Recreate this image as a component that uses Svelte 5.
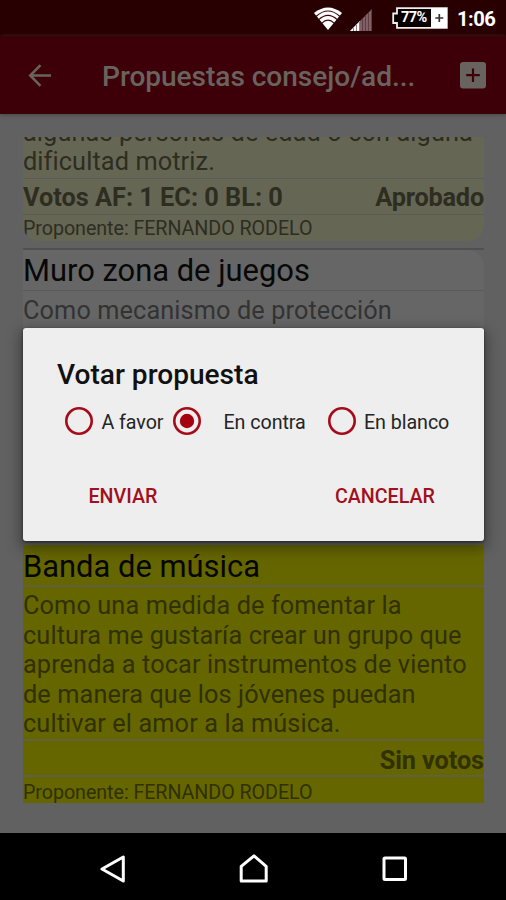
<script>
  const options = [
    { label: 'A favor', cls: 'favor' },
    { label: 'En contra', cls: 'contra' },
    { label: 'En blanco', cls: 'blanco' }
  ];
  let selected = $state(1);
  const signal = [3, 6, 9, 12, 15, 18, 21];
</script>

<div class="screen">
  <header class="status">
    <svg class="wifi" width="28" height="24" viewBox="0 0 28 24">
      <path d="M0 6Q14-5 28 6L14 23Z" fill="#fff" />
      <path d="M2 9.5Q14-1.5 26 9.5M4.5 12.8Q14 4 23.5 12.8M7.6 16.4Q14 10 20.4 16.4" fill="none" stroke="#390408" stroke-width="1.1" />
    </svg>
    <svg class="signal" width="22" height="22" viewBox="0 0 22 22">
      <path d="M0 22L22 0V22Z" fill="#806066" />
      <path d="M0 22L10 12V22Z" fill="#fff" />
      {#each signal as x}
        <path d={`M${x + 0.5} ${22 - x}V22`} stroke="#4b2529" stroke-width=".6" />
      {/each}
    </svg>
    <div class="battery">
      <svg width="56" height="23" viewBox="0 0 56 23">
        <path d="M5 1.2H54.8V20.8H5V16H1.2V6.5H5Z" fill="#080000" stroke="#eee" stroke-width="1.8" />
        <path d="M39 1H55V21H39Z" fill="#fff" />
        <path d="M47.3 7V15M43.3 11H51.3" stroke="#393035" stroke-width="1.7" />
      </svg>
      <b>77%</b>
    </div>
    <span class="clock">1:06</span>
  </header>

  <div class="appbar">
    <svg class="back" width="24" height="24" viewBox="0 0 24 24" fill="none" stroke="#68635f" stroke-width="2.5">
      <path d="M12.5 1.2L2.2 11.5L12.5 21.8M2.5 11.5H23" />
    </svg>
    <h1>Propuestas consejo/ad...</h1>
    <svg class="add" width="26" height="27" viewBox="0 0 26 27">
      <rect width="26" height="26.5" rx="3" fill="#68635f" />
      <path d="M13 6.5V20M6.2 13.2H19.8" stroke="#3d0008" stroke-width="2.2" />
    </svg>
  </div>

  <main>
    <div class="list">
      <article class="pale">
        <p class="clip">algunas personas de edad o con alguna<br />dificultad motriz.</p>
        <div class="result"><b>Votos AF: 1 EC: 0 BL: 0</b><b class="state">Aprobado</b></div>
        <small>Proponente: FERNANDO RODELO</small>
      </article>
      <hr />
      <article class="plain">
        <h2>Muro zona de juegos</h2>
        <p>Como mecanismo de protección</p>
      </article>
      <article class="yellow">
        <h2>Banda de música</h2>
        <p>Como una medida de fomentar la<br />cultura me gustaría crear un grupo que<br />aprenda a tocar instrumentos de viento<br />de manera que los jóvenes puedan<br />cultivar el amor a la música.</p>
        <div class="result last"><b>Sin votos</b></div>
        <small>Proponente: FERNANDO RODELO</small>
      </article>
    </div>
  </main>

  <nav>
    <svg width="26" height="28" viewBox="0 0 26 28"><path d="M2 14L23.3 2V26Z" /></svg>
    <svg width="30" height="29" viewBox="0 0 30 29"><path d="M2.2 27V12.3L15 1.8L27.2 12.3V27Z" /></svg>
    <svg width="26" height="26" viewBox="0 0 26 26"><rect x="2" y="2" width="21.5" height="21.5" rx="1" /></svg>
  </nav>

  <section class="dialog" role="dialog" aria-label="Votar propuesta">
    <h3>Votar propuesta</h3>
    <div class="options">
      {#each options as o, i}
        <button class={o.cls} onclick={() => (selected = i)}>
          <svg width="30" height="30" viewBox="0 0 30 30">
            <circle cx="15" cy="15" r="12.7" fill="none" stroke="#a50b18" stroke-width="2.6" />
            {#if selected === i}<circle cx="15" cy="15" r="7.2" fill="#a5000f" />{/if}
          </svg>
          <span>{o.label}</span>
        </button>
      {/each}
    </div>
    <div class="actions"><button>ENVIAR</button><button>CANCELAR</button></div>
  </section>
</div>

<style>
  :global(body) { margin: 0; background: #000; }
  .screen { position: relative; width: 506px; height: 900px; display: flex; flex-direction: column; overflow: hidden; font-family: Roboto, sans-serif; background: #616161; }
  svg { display: block; flex: none; }
  .status { height: 36px; flex: none; box-sizing: border-box; display: flex; align-items: flex-start; padding: 7px 0 0 314px; background: #280002; }
  .signal { margin: 2px 0 0 8px; }
  .battery { position: relative; margin-left: 20px; }
  .battery b { position: absolute; left: 9px; top: 2px; font-size: 14.5px; line-height: 18px; color: #fff; letter-spacing: -.6px; }
  .clock { margin: -1px 0 0 9px; font-size: 20.2px; line-height: 26px; font-weight: 700; letter-spacing: -.5px; color: #fff; white-space: nowrap; }
  .appbar { height: 78px; flex: none; box-sizing: border-box; display: flex; align-items: flex-start; padding: 26px 20px 0 28px; background: #3d0008; box-shadow: 0 1px 4px #454545; z-index: 1; }
  .back { margin-top: 2px; }
  h1 { margin: -2px 0 0 50px; flex: 1; font-size: 28.1px; line-height: 34px; font-weight: 500; color: #68635f; letter-spacing: -.05px; white-space: nowrap; }
  main { flex: 1; min-height: 0; padding: 23px 22px 0 23px; }
  .list { display: flex; flex-direction: column; height: 666px; overflow: hidden; }
  article { flex: none; box-sizing: border-box; display: flex; flex-direction: column; white-space: nowrap; overflow: hidden; }
  .pale { height: 104px; background: #666655; color: #2d2d20; border-radius: 0 0 16px 16px; }
  .pale .clip { margin-top: -19px; height: 60px; line-height: 29px; }
  .pale .result { border-top: 1px solid #5b5b55; height: 35px; line-height: 37px; }
  .pale small { border-top: 1px solid #5b5b55; height: 26px; line-height: 28px; }
  hr { flex: none; margin: 7px 0 0; border: 0; height: 2px; background: #505050; }
  .plain { height: 286px; background: #666; border-radius: 0 16px 0 0; }
  .plain h2 { height: 40px; line-height: 42px; }
  .plain p { border-top: 1px solid #5a5a5a; color: #333; line-height: 39px; }
  .yellow { margin-top: 9px; height: 258px; background: #666600; color: #303000; }
  .yellow h2 { height: 40px; line-height: 43px; }
  .yellow p { height: 154px; line-height: 29.5px; padding-top: 4px; box-sizing: border-box; border-top: 2px solid #616140; }
  .yellow .result { height: 36px; line-height: 40px; border-top: 2px solid #616140; box-sizing: border-box; }
  .yellow small { border-top: 2px solid #616140; line-height: 31px; }
  h2 { margin: 0; font-size: 30.9px; font-weight: 400; color: #080808; }
  .yellow h2 { color: #060600; }
  p { margin: 0; font-size: 25.3px; letter-spacing: .1px; }
  .result { display: flex; justify-content: space-between; font-size: 25.3px; }
  .last { justify-content: flex-end; letter-spacing: -.1px; }
  .state { letter-spacing: -.2px; }
  small { font-size: 19.7px; letter-spacing: -.06px; }
  nav { height: 67px; flex: none; display: flex; align-items: center; gap: 113px; box-sizing: border-box; padding: 4px 0 0 100px; background: #000; }
  nav svg { fill: none; stroke: #fff; stroke-width: 3; stroke-linejoin: round; }
  .dialog { position: absolute; left: 23px; top: 328px; width: 461px; height: 213px; border-radius: 3px; background: #eee; box-shadow: 0 5px 14px 3px rgba(0,0,0,.35), 0 1px 3px rgba(0,0,0,.5); }
  h3 { margin: 30px 0 0 34px; font-size: 28.1px; line-height: 34px; font-weight: 500; color: #111; white-space: nowrap; }
  .options { display: flex; margin: 14px 0 0 41px; height: 30px; }
  button { border: 0; padding: 0; background: none; font: inherit; }
  .options button { display: flex; align-items: center; font-size: 19.7px; letter-spacing: -.07px; color: #252525; white-space: nowrap; }
  .options span { margin: 2px 0 0 7.5px; }
  .favor { width: 108px; }
  .contra { width: 154.5px; }
  .options .contra span { margin-left: 21.5px; }
  .actions { display: flex; justify-content: space-between; margin: 49px 49px 0 65.5px; }
  .actions button { font-size: 19.7px; line-height: 24px; font-weight: 500; color: #a1101c; }
</style>
